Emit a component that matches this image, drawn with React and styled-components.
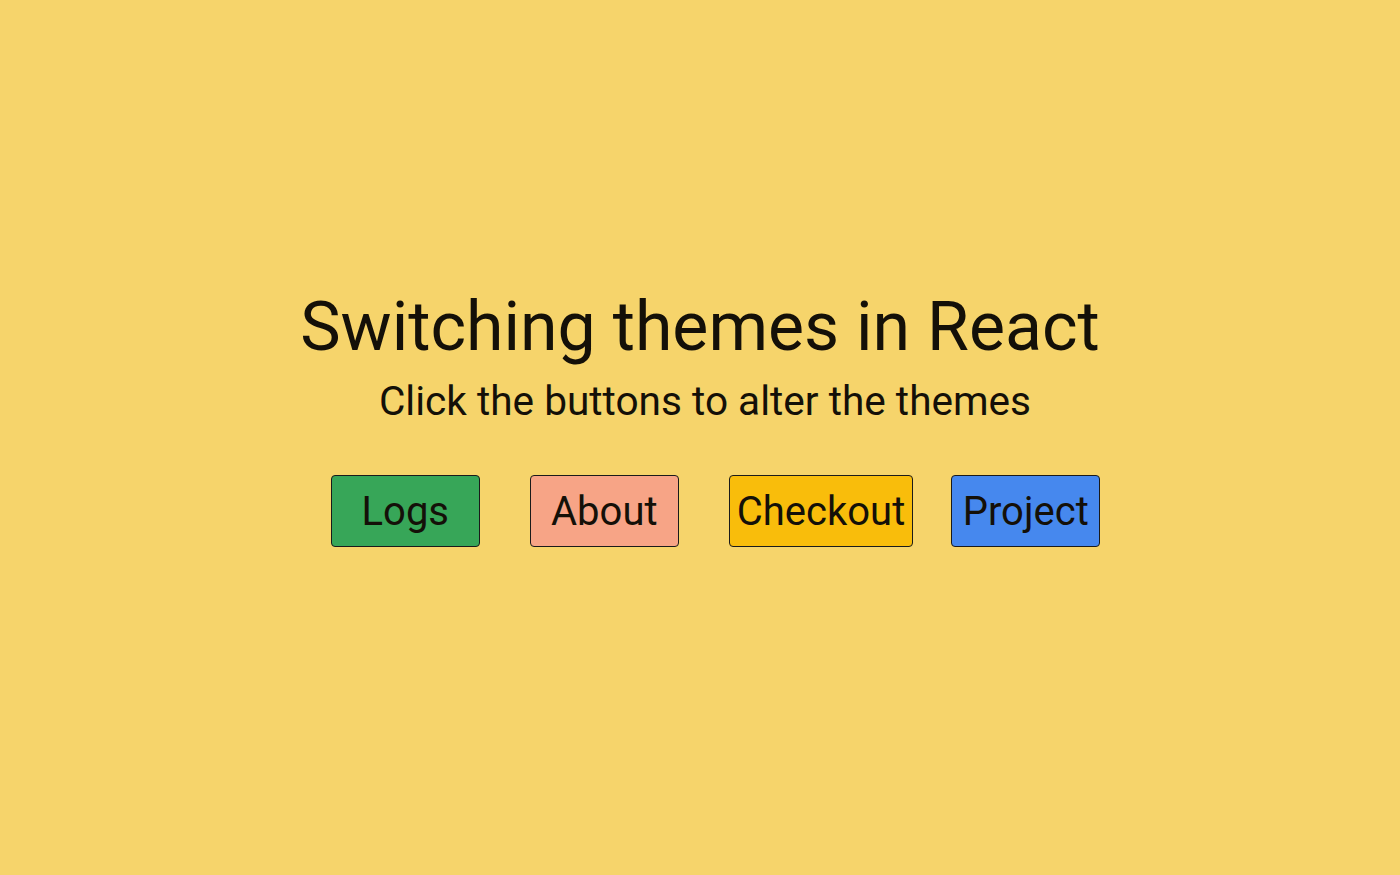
import React from 'react';
import styled, { createGlobalStyle } from 'styled-components';

const GlobalStyle = createGlobalStyle`
  html, body {
    margin: 0;
    padding: 0;
    background: #f6d46b;
  }
  body {
    font-family: Roboto, 'Liberation Sans', sans-serif;
    color: #141008;
  }
`;

const Page = styled.div`
  height: 875px;
  display: flex;
  flex-direction: column;
  align-items: center;
  padding-top: 287px;
  box-sizing: border-box;
`;

const Title = styled.h1`
  margin: 0;
  font-size: 68px;
  font-weight: 400;
  line-height: 80px;
`;

const Subtitle = styled.p`
  margin: 10px 0 0;
  padding-left: 10px;
  font-size: 40.6px;
  line-height: 48px;
`;

const Row = styled.div`
  display: flex;
  align-items: center;
  margin-top: 50px;
  padding-left: 31px;
`;

const ThemeButton = styled.button`
  box-sizing: border-box;
  min-width: 149px;
  height: 72px;
  padding: 0 7px;
  margin-left: ${(p) => p.gap}px;
  background: ${(p) => p.bg};
  border: 1px solid #1a1a1a;
  border-radius: 4px;
  font-family: Roboto, 'Liberation Sans', sans-serif;
  font-size: 40px;
  color: #141008;
  cursor: pointer;
`;

const buttons = [
  { label: 'Logs', bg: '#37a658', gap: 0 },
  { label: 'About', bg: '#f7a486', gap: 50 },
  { label: 'Checkout', bg: '#f9bd0b', gap: 50 },
  { label: 'Project', bg: '#4688ee', gap: 38 },
];

export default function App() {
  return (
    <>
      <GlobalStyle />
      <Page>
        <Title>Switching themes in React</Title>
        <Subtitle>Click the buttons to alter the themes</Subtitle>
        <Row>
          {buttons.map((b) => (
            <ThemeButton key={b.label} bg={b.bg} gap={b.gap}>
              {b.label}
            </ThemeButton>
          ))}
        </Row>
      </Page>
    </>
  );
}
